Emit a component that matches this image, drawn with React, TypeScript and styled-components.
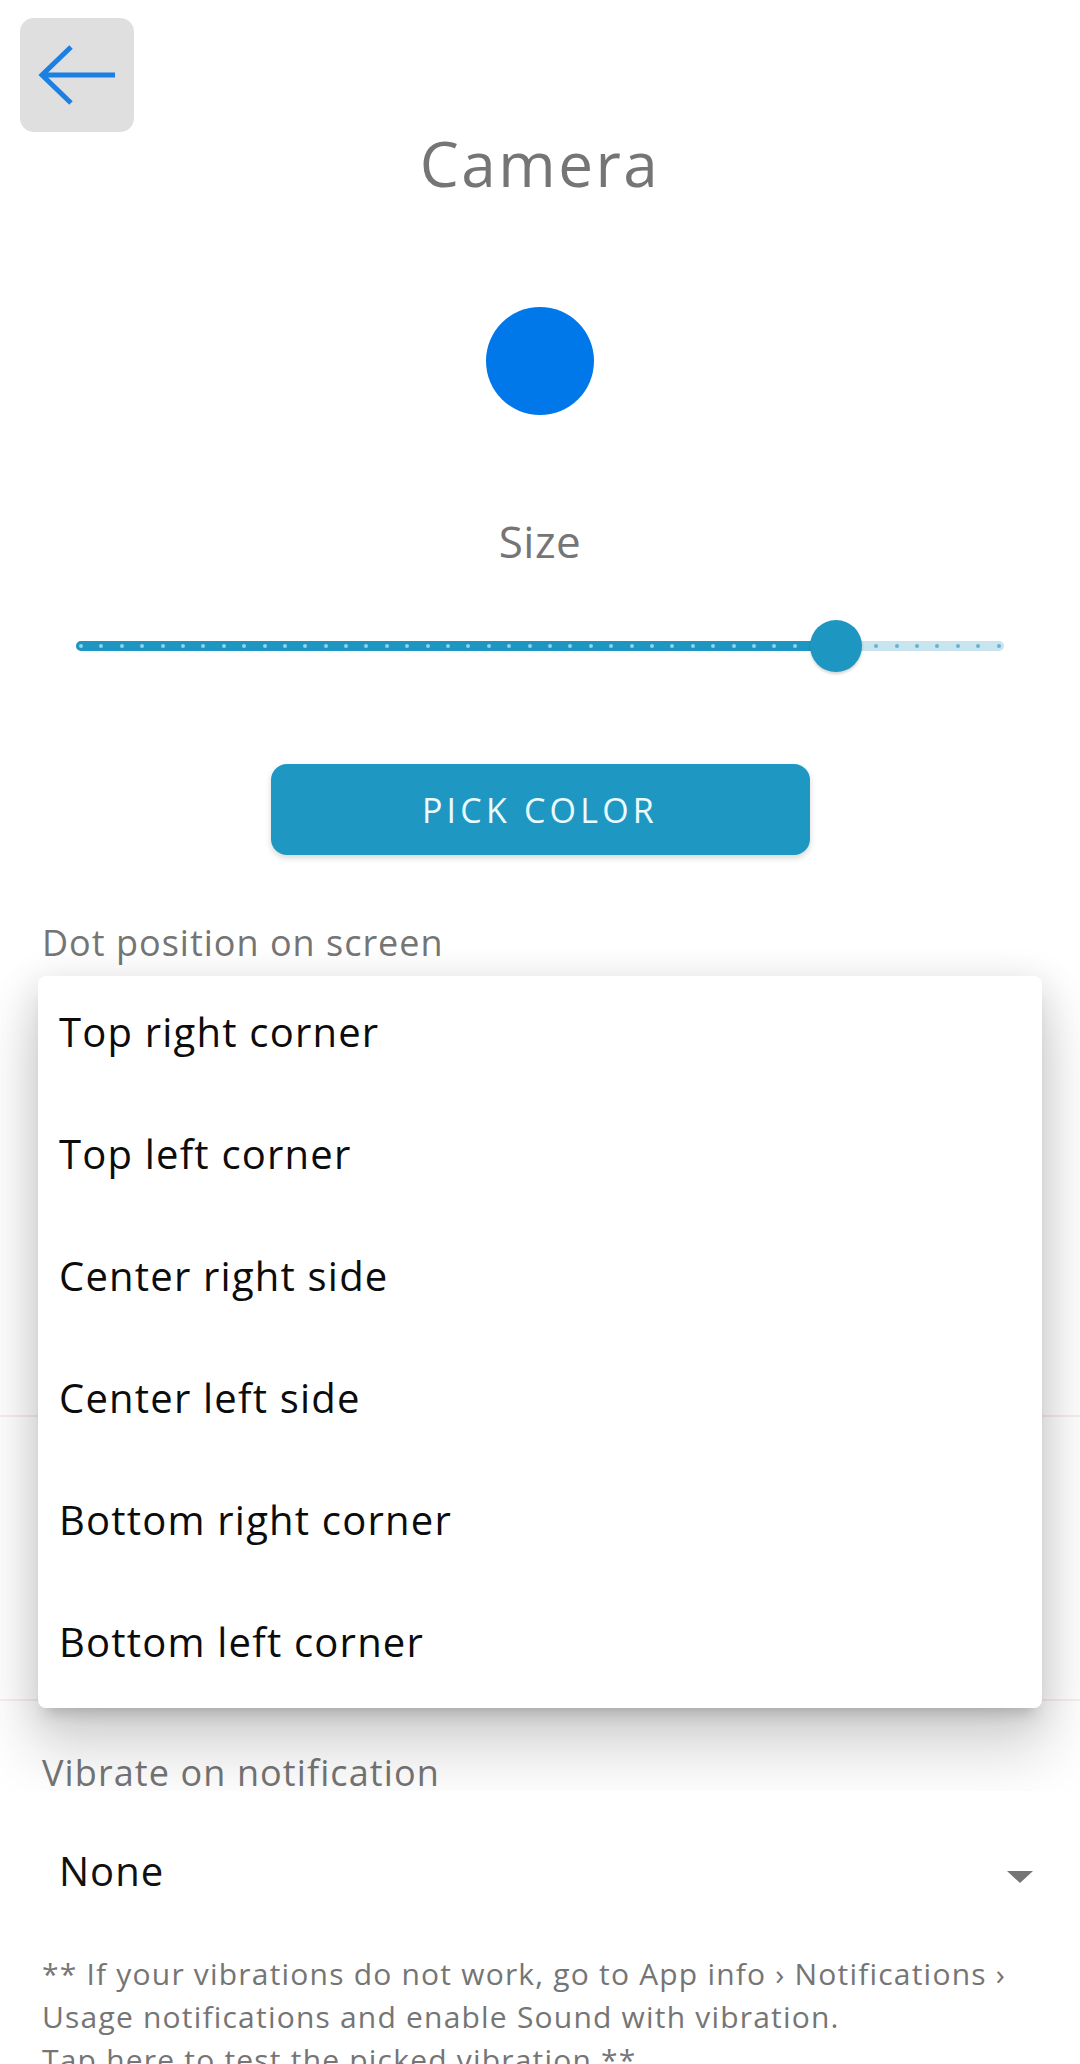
import { useState } from "react";
import styled, { createGlobalStyle } from "styled-components";

const GlobalStyle = createGlobalStyle`
  html, body {
    margin: 0;
    padding: 0;
    background: #ffffff;
    font-family: "Open Sans", "Noto Sans", sans-serif;
  }
`;

const Page = styled.div`
  width: 1080px;
  display: flex;
  flex-direction: column;
  background: #ffffff;
`;

const BackButton = styled.button`
  width: 114px;
  height: 114px;
  margin: 18px 0 0 20px;
  padding: 0;
  border: none;
  border-radius: 14px;
  background: #dfdfdf;
  display: flex;
  align-items: center;
  justify-content: center;
  cursor: pointer;
`;

const Title = styled.h1`
  margin: -5px 0 0;
  text-align: center;
  font-size: 62px;
  line-height: 72px;
  font-weight: 500;
  color: #757575;
  letter-spacing: 2.5px;
`;

const Dot = styled.div<{ $size: number }>`
  width: ${(p) => p.$size}px;
  height: ${(p) => p.$size}px;
  border-radius: 50%;
  background: #0078ea;
  margin: 108px auto 0;
`;

const SizeLabel = styled.div`
  margin-top: 96px;
  text-align: center;
  font-size: 44px;
  line-height: 60px;
  letter-spacing: 0.5px;
  color: #757575;
`;

const SliderWrap = styled.div`
  margin: 45px 76px 0;
  height: 60px;
  display: flex;
  align-items: center;
  position: relative;
`;

const Track = styled.div`
  flex: 1;
  height: 10px;
  border-radius: 5px;
  background: #c8e4ef;
  display: flex;
  align-items: center;
  justify-content: space-between;
  padding: 0 3px;
  overflow: hidden;
`;

const Tick = styled.span<{ $active: boolean }>`
  width: 4px;
  height: 4px;
  border-radius: 50%;
  background: ${(p) => (p.$active ? "#8ed3ea" : "#6cb2cf")};
  position: relative;
  z-index: 1;
`;

const ActiveFill = styled.div`
  position: absolute;
  left: 0;
  top: 25px;
  height: 10px;
  border-radius: 5px;
  background: #1e96c2;
`;

const Thumb = styled.div`
  position: absolute;
  top: 4px;
  width: 52px;
  height: 52px;
  margin-left: -26px;
  border-radius: 50%;
  background: #1e96c2;
  box-shadow: 0 2px 3px rgba(0, 0, 0, 0.18);
  z-index: 2;
`;

const PickButton = styled.button`
  align-self: center;
  margin-top: 88px;
  width: 539px;
  height: 91px;
  border: none;
  border-radius: 16px;
  background: #1e98c2;
  color: #eafcff;
  font-family: "Open Sans", sans-serif;
  font-size: 34px;
  font-weight: 500;
  letter-spacing: 4.2px;
  box-shadow: 0 3px 6px rgba(0, 0, 0, 0.16);
  cursor: pointer;
`;

const Section = styled.div`
  position: relative;
`;

const FieldLabel = styled.div<{ $top: number }>`
  margin: ${(p) => p.$top}px 42px 0;
  font-size: 36px;
  line-height: 48px;
  letter-spacing: 1px;
  color: #757575;
`;

const HiddenBlock = styled.div<{ $h: number }>`
  height: ${(p) => p.$h}px;
  border-bottom: 2px solid #f8eeeb;
`;

const Menu = styled.ul`
  position: absolute;
  top: 121px;
  left: 38px;
  width: 1004px;
  margin: 0;
  padding: 0;
  list-style: none;
  background: #ffffff;
  border-radius: 8px;
  box-shadow: 0 13px 13px -8px rgba(0, 0, 0, 0.16),
    0 40px 60px 8px rgba(0, 0, 0, 0.14), 0 8px 37px 5px rgba(0, 0, 0, 0.1);
  z-index: 3;
`;

const MenuItem = styled.li`
  height: 122px;
  box-sizing: border-box;
  padding: 0 0 12px 21px;
  display: flex;
  align-items: center;
  font-size: 40px;
  letter-spacing: 1.2px;
  color: #0c0c0c;
`;

const VibrateLabel = styled.div`
  margin: 54px 42px 0;
  font-size: 36px;
  line-height: 36px;
  letter-spacing: 1.1px;
  color: #757575;
`;

const SelectRow = styled.div`
  position: relative;
  z-index: 4;
  background: #ffffff;
  display: flex;
  align-items: center;
  justify-content: space-between;
  padding: 55px 47px 56px 59px;
`;

const SelectValue = styled.span`
  font-size: 40px;
  line-height: 50px;
  letter-spacing: 1px;
  color: #111111;
`;

const Caret = styled.span`
  width: 0;
  height: 0;
  margin-top: 12px;
  border-left: 13px solid transparent;
  border-right: 13px solid transparent;
  border-top: 12px solid #757575;
`;

const Note = styled.p`
  position: relative;
  z-index: 4;
  margin: 0;
  padding: 0 20px 0 42px;
  background: #ffffff;
  font-size: 30px;
  line-height: 43px;
  letter-spacing: 1.2px;
  color: #757575;
  white-space: nowrap;
`;

const positions = [
  "Top right corner",
  "Top left corner",
  "Center right side",
  "Center left side",
  "Bottom right corner",
  "Bottom left corner",
];

const STEPS = 45;

export default function App() {
  const [value] = useState(37);
  const pct = value / STEPS;
  // thumb sits on the tick centers, which are inset 5px from the track ends
  const thumbLeft = `calc(5px + (100% - 10px) * ${pct})`;

  return (
    <Page>
      <GlobalStyle />
      <BackButton aria-label="Back">
        <svg width="114" height="114" viewBox="0 0 114 114" fill="none">
          <path
            d="M95 57H23M51 29L22 57L51 85"
            stroke="#1b7fe3"
            strokeWidth="5"
            strokeLinecap="butt"
            strokeLinejoin="miter"
          />
        </svg>
      </BackButton>
      <Title>Camera</Title>

      <Dot $size={108} />

      <SizeLabel>Size</SizeLabel>
      <SliderWrap>
        <Track>
          {Array.from({ length: STEPS + 1 }).map((_, i) => (
            <Tick key={i} $active={i < value} />
          ))}
        </Track>
        <ActiveFill style={{ width: thumbLeft }} />
        <Thumb style={{ left: thumbLeft }} />
      </SliderWrap>

      <PickButton>PICK COLOR</PickButton>

      <Section>
        <FieldLabel $top={64}>Dot position on screen</FieldLabel>
        <HiddenBlock $h={448} />
        <HiddenBlock $h={282} />
        <Menu>
          {positions.map((p) => (
            <MenuItem key={p}>{p}</MenuItem>
          ))}
        </Menu>
      </Section>

      <VibrateLabel>Vibrate on notification</VibrateLabel>
      <SelectRow>
        <SelectValue>None</SelectValue>
        <Caret />
      </SelectRow>
      <Note>
        ** If your vibrations do not work, go to App info › Notifications ›
        <br />
        Usage notifications and enable Sound with vibration.
        <br />
        Tap here to test the picked vibration **
      </Note>
    </Page>
  );
}
